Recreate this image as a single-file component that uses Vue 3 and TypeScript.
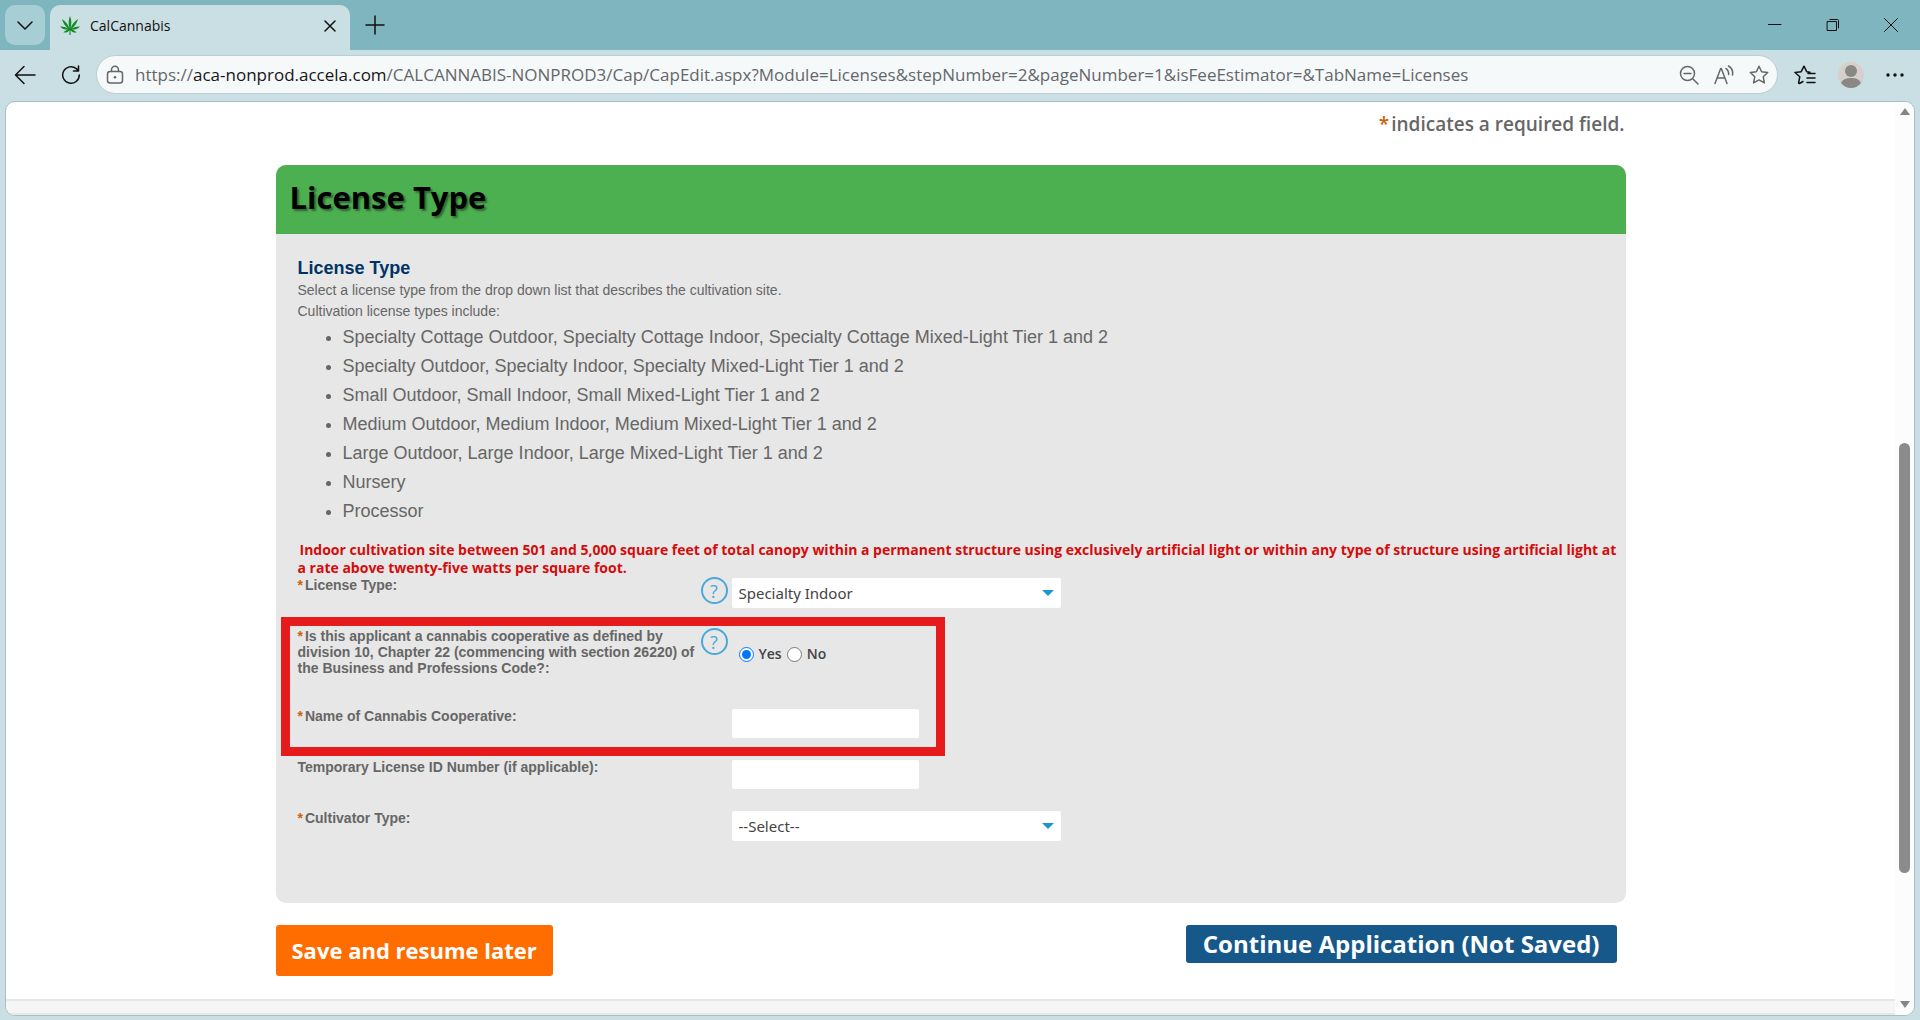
<script setup lang="ts">
import { ref } from 'vue'

const address = {
  scheme: 'https://',
  host: 'aca-nonprod.accela.com',
  path: '/CALCANNABIS-NONPROD3/Cap/CapEdit.aspx?Module=Licenses&stepNumber=2&pageNumber=1&isFeeEstimator=&TabName=Licenses',
}

const cultivationTypes: string[] = [
  'Specialty Cottage Outdoor, Specialty Cottage Indoor, Specialty Cottage Mixed-Light Tier 1 and 2',
  'Specialty Outdoor, Specialty Indoor, Specialty Mixed-Light Tier 1 and 2',
  'Small Outdoor, Small Indoor, Small Mixed-Light Tier 1 and 2',
  'Medium Outdoor, Medium Indoor, Medium Mixed-Light Tier 1 and 2',
  'Large Outdoor, Large Indoor, Large Mixed-Light Tier 1 and 2',
  'Nursery',
  'Processor',
]

const licenseType = ref('Specialty Indoor')
const isCooperative = ref('yes')
const cooperativeName = ref('')
const temporaryId = ref('')
const cultivatorType = ref('')
</script>

<template>
  <div class="browser">
    <header class="tab-strip">
      <button class="tab-menu" type="button" aria-label="Tab actions">
        <svg width="18" height="18" viewBox="0 0 18 18"><path d="M2 6l7 7 7-7" /></svg>
      </button>
      <div class="tab">
        <svg class="leaf" width="20" height="20" viewBox="0 0 20 20">
          <path d="M10 0C8.300 4 8.300 8 9.500 12 7.800 8.200 5 5 2 3c.9 4 3.300 7.200 6.600 9.700C6 11.200 3 10.400 0 10.500c2 2.300 4.800 3.400 8.300 3.300-2 .3-3.800 1.200-4.900 2.600 2.300.6 4.400-.1 6.100-1.800L9.400 19h1.200l-.1-4.400c1.700 1.700 3.800 2.400 6.100 1.800-1.100-1.400-2.900-2.300-4.900-2.600 3.500.1 6.300-1 8.300-3.300-3-.1-6 .7-8.600 2.200C14.700 10.200 17.100 7 18 3c-3 2-5.800 5.200-7.500 9C11.700 8 11.700 4 10 0z" />
        </svg>
        <span class="tab-title">CalCannabis</span>
        <button class="tab-close" type="button" aria-label="Close tab">
          <svg width="12" height="12" viewBox="0 0 12 12"><path d="M1 1l10 10M11 1L1 11" /></svg>
        </button>
      </div>
      <button class="new-tab" type="button" aria-label="New tab">
        <svg width="20" height="20" viewBox="0 0 20 20"><path d="M10 1v18M1 10h18" /></svg>
      </button>
      <div class="window-controls">
        <button type="button" aria-label="Minimize">
          <svg width="14" height="14" viewBox="0 0 14 14"><path class="thin" d="M0 6.500h13" /></svg>
        </button>
        <button type="button" aria-label="Restore">
          <svg width="14" height="14" viewBox="0 0 14 14"><path class="thin" d="M1.500 3.500h9v9h-9zM4 1.500h7.500q1 0 1 1V10" /></svg>
        </button>
        <button type="button" aria-label="Close window">
          <svg width="14" height="14" viewBox="0 0 14 14"><path class="thin" d="M.5.500l13 13M13.500.500l-13 13" /></svg>
        </button>
      </div>
    </header>

    <nav class="toolbar">
      <button type="button" aria-label="Back">
        <svg width="22" height="20" viewBox="0 0 22 20"><path d="M10 1.500L1.500 10l8.500 8.500M1.500 10H21" /></svg>
      </button>
      <button type="button" aria-label="Refresh">
        <svg width="20" height="20" viewBox="0 0 20 20"><path d="M18.300 10a8.300 8.300 0 1 1-3-6.400l2 2M17.500 1v5h-5" /></svg>
      </button>
      <div class="address-bar">
        <svg class="lock" width="18" height="20" viewBox="0 0 18 20">
          <rect x="1.500" y="6.500" width="15" height="11.500" rx="2.500" /><path d="M5.500 6.500V4.700a3.500 3.500 0 0 1 7 0v1.800" /><circle class="dot" cx="9" cy="12.300" r="1.300" />
        </svg>
        <span class="url">{{ address.scheme }}<b>{{ address.host }}</b>{{ address.path }}</span>
        <div class="address-actions">
          <button type="button" aria-label="Zoom out">
            <svg width="20" height="20" viewBox="0 0 20 20"><circle cx="8.500" cy="8.500" r="7" /><path d="M13.700 13.700l5.300 5.300M5 8.500h7" /></svg>
          </button>
          <button type="button" aria-label="Read aloud">
            <svg width="20" height="20" viewBox="0 0 20 20"><path d="M1 18.500L6.700 3.500h.6l5.700 15M3.200 13h7.600M12 3.500q3 2 2.600 6M14.500 1q5 3 4 9" /></svg>
          </button>
          <button type="button" aria-label="Add to favorites">
            <svg width="20" height="20" viewBox="0 0 20 20"><path d="M10 1.200l2.600 5.600 6.100.7-4.500 4.200 1.200 6.200-5.400-3-5.400 3 1.200-6.200L1.300 7.500l6.100-.7z" /></svg>
          </button>
        </div>
      </div>
      <div class="browser-actions">
        <button type="button" aria-label="Favorites">
          <svg width="22" height="20" viewBox="0 0 22 20"><path d="M9 16.500L5.500 18.500l-.9-.5 1.200-6.300L1 7.500l6.200-.8L10 1.200l2.700 5.500 3.300.5M14 8.500h7M13 13h8M13 17.500h8" /></svg>
        </button>
        <button type="button" aria-label="Profile">
          <svg class="avatar" width="26" height="28" viewBox="0 0 26 28"><circle cx="13" cy="14" r="13" fill="#d5d0cc" /><circle cx="13" cy="10" r="6" fill="#8b8785" /><path d="M3 22q2-5 10-5t10 5q-4 5-10 5T3 22z" fill="#8b8785" /></svg>
        </button>
        <button type="button" aria-label="Settings and more">
          <svg class="dots" width="18" height="6" viewBox="0 0 18 6"><circle cx="2" cy="3" r="1.700" /><circle cx="9" cy="3" r="1.700" /><circle cx="16" cy="3" r="1.700" /></svg>
        </button>
      </div>
    </nav>

    <div class="viewport">
      <div class="page">
        <main class="content">
          <p class="required-note"><span class="star">*</span>indicates a required field.</p>

          <form class="card" @submit.prevent>
            <h1>License Type</h1>
            <div class="card-body">
              <h2>License Type</h2>
              <p class="intro">Select a license type from the drop down list that describes the cultivation site.</p>
              <p class="intro">Cultivation license types include:</p>
              <ul>
                <li v-for="item in cultivationTypes" :key="item">{{ item }}</li>
              </ul>
              <p class="warning">
                Indoor cultivation site between 501 and 5,000 square feet of total canopy within a permanent structure using exclusively artificial light or within any type of structure using artificial light at a rate above twenty-five watts per square foot.
              </p>

              <div class="row">
                <label for="license-type"><span class="star">*</span>License Type:</label>
                <button class="help" type="button" aria-label="Help: license type">?</button>
                <div class="select">
                  <select id="license-type" v-model="licenseType"><option>Specialty Indoor</option></select>
                </div>
              </div>

              <div class="highlight">
                <div class="row tall" role="radiogroup" aria-labelledby="coop-question">
                  <span id="coop-question"><span class="star">*</span>Is this applicant a cannabis cooperative as defined by division 10, Chapter 22 (commencing with section 26220) of the Business and Professions Code?:</span>
                  <button class="help" type="button" aria-label="Help: cannabis cooperative">?</button>
                  <div class="radios">
                    <input id="coop-yes" v-model="isCooperative" type="radio" name="coop" value="yes"><label for="coop-yes">Yes</label>
                    <input id="coop-no" v-model="isCooperative" type="radio" name="coop" value="no"><label for="coop-no">No</label>
                  </div>
                </div>
                <div class="row">
                  <label for="coop-name"><span class="star">*</span>Name of Cannabis Cooperative:</label>
                  <input id="coop-name" v-model="cooperativeName" class="text" type="text">
                </div>
              </div>

              <div class="row">
                <label for="temp-id">Temporary License ID Number (if applicable):</label>
                <input id="temp-id" v-model="temporaryId" class="text" type="text">
              </div>
              <div class="row">
                <label for="cultivator-type"><span class="star">*</span>Cultivator Type:</label>
                <div class="select">
                  <select id="cultivator-type" v-model="cultivatorType"><option value="">--Select--</option></select>
                </div>
              </div>
            </div>
          </form>

          <div class="actions">
            <button class="save" type="button">Save and resume later</button>
            <button class="continue" type="button">Continue Application (Not Saved)</button>
          </div>
        </main>
        <div class="page-footer"></div>
      </div>
      <div class="scrollbar" aria-hidden="true">
        <i class="arrow-up"></i>
        <div class="track"><i class="thumb"></i></div>
        <i class="arrow-down"></i>
      </div>
    </div>
  </div>
</template>

<style>
body {
  margin: 0;
}
</style>

<style scoped>
*,
*::before,
*::after {
  box-sizing: border-box;
}

.browser {
  display: flex;
  flex-direction: column;
  min-height: 100vh;
  background: #c9dfe3;
  font-family: "Open Sans", "Noto Sans", sans-serif;
}

button {
  margin: 0;
  padding: 0;
  border: 0;
  background: none;
  color: inherit;
  font-family: inherit;
}

svg {
  display: block;
  fill: none;
  stroke: #111;
  stroke-width: 1.5;
  stroke-linecap: round;
  stroke-linejoin: round;
}

.thin {
  stroke-width: 1;
}

h1,
h2,
p,
ul {
  margin: 0;
}

/* Tab strip */
.tab-strip {
  display: flex;
  align-items: flex-end;
  height: 50px;
  padding-left: 5px;
  background: #7eb5be;
}

.tab-menu {
  display: grid;
  place-items: center;
  width: 40px;
  height: 40px;
  margin: 0 5px 5px 0;
  border-radius: 10px;
  background: #a8ced5;
}

.tab {
  display: flex;
  align-items: center;
  gap: 10px;
  width: 300px;
  height: 45px;
  padding: 0 14px 4px 10px;
  border-radius: 10px 10px 0 0;
  background: #c9dfe3;
}

.leaf {
  fill: #148a24;
  stroke: none;
}

.tab-title {
  flex: 1;
  color: #111;
  font-size: 14px;
}

.new-tab {
  margin: 0 0 15px 15px;
}

.window-controls {
  display: flex;
  align-self: center;
  gap: 44px;
  margin: 0 22px 0 auto;
}

/* Address row */
.toolbar {
  display: flex;
  align-items: center;
  height: 51px;
  padding: 0 16px 2px 14px;
  gap: 25px;
}

.address-bar {
  display: flex;
  flex: 1;
  align-items: center;
  height: 39px;
  margin: 0 -9px 0 -10px;
  padding: 0 8px 0 9px;
  border: 1px solid #bccdd0;
  border-radius: 20px;
  background: #f6f9fa;
}

.lock,
.address-actions svg {
  stroke: #666;
}

.lock .dot {
  fill: #666;
  stroke: none;
}

.url {
  flex: 1;
  padding-left: 11px;
  color: #646769;
  font-size: 17px;
  white-space: nowrap;
}

.url b {
  color: #161616;
  font-weight: 400;
}

.address-actions {
  display: flex;
  gap: 15px;
}

.browser-actions {
  display: flex;
  align-items: center;
  gap: 22px;
}

.avatar {
  stroke: none;
}

.dots {
  fill: #111;
  stroke: none;
}

/* Web page */
.viewport {
  display: flex;
  flex: 1;
  margin: 0 5px 4px;
  border: 1px solid #a9bfc3;
  border-radius: 10px;
  background: #fff;
  overflow: hidden;
}

.page {
  display: flex;
  flex: 1;
  flex-direction: column;
}

.content {
  width: 100%;
  max-width: 1350px;
  margin: 0 auto;
  color: #666;
}

.required-note {
  padding: 9px 1px 27px 0;
  font-size: 19px;
  font-weight: 600;
  line-height: 27px;
  text-align: right;
}

.star {
  margin-right: 2px;
  color: #c8640a;
}

.card {
  border-radius: 10px;
  background: #e7e7e7;
  overflow: hidden;
}

h1 {
  padding: 10px 14px 15px;
  background: #4caf50;
  color: #000;
  font-size: 31px;
  font-weight: 700;
  line-height: 44px;
  text-shadow: 2px 2px 2px rgba(0, 0, 0, 0.4);
}

.card-body {
  padding: 22px 0 42px 22px;
  font-family: "Liberation Sans", Arial, sans-serif;
}

h2 {
  color: #003366;
  font-size: 18px;
  line-height: 24px;
}

.intro {
  font-size: 14px;
  line-height: 21px;
}

ul {
  padding: 1px 0 0 45px;
  font-size: 18px;
  line-height: 29px;
}

.warning {
  padding: 15px 8px 0 0;
  color: #d60b0b;
  font-family: "Open Sans", "Noto Sans", sans-serif;
  font-size: 14px;
  font-weight: 700;
  line-height: 18px;
  text-indent: 2px;
}

.row {
  display: grid;
  grid-template-columns: 404px 30px 1fr;
  align-items: start;
  min-height: 51px;
  font-size: 14px;
  font-weight: 700;
  line-height: 16px;
}

.row.tall {
  min-height: 80px;
}

.highlight {
  position: relative;
}

/* Red frame drawn round the two cooperative questions */
.highlight::after {
  content: "";
  position: absolute;
  top: -11px;
  left: -17px;
  width: 664px;
  height: 139px;
  border: 9px solid #e61c1c;
  pointer-events: none;
}

.help {
  width: 27px;
  height: 27px;
  margin-left: -1px;
  border: 2px solid #4aa9d8;
  border-radius: 50%;
  color: #4aa9d8;
  font-family: "Open Sans", sans-serif;
  font-size: 18px;
  line-height: 22px;
}

.select,
.text,
.radios {
  grid-column: 3;
}

.select {
  position: relative;
  width: 329px;
  margin-top: 1px;
}

.select::after {
  content: "";
  position: absolute;
  top: 12px;
  right: 7px;
  border: 6px solid transparent;
  border-top-color: #1b96d5;
  border-bottom: 0;
  pointer-events: none;
}

select {
  display: block;
  width: 100%;
  height: 30px;
  padding: 0 24px 0 7px;
  border: 0;
  border-radius: 2px;
  appearance: none;
  background: #fff;
  color: #444;
  font: 15px "Noto Sans", sans-serif;
}

.text {
  width: 187px;
  height: 29px;
  margin-top: 1px;
  padding: 0 7px;
  border: 0;
  border-radius: 2px;
  background: #fff;
  font: 15px "Noto Sans", sans-serif;
}

.radios {
  display: flex;
  align-items: center;
  gap: 5px;
  padding: 18px 0 0 7px;
  color: #444;
  font-family: "Open Sans", "Noto Sans", sans-serif;
  font-weight: 600;
}

.radios input {
  width: 15px;
  height: 15px;
  margin: 0;
  accent-color: #0075ff;
}

.actions {
  display: flex;
  align-items: flex-start;
  justify-content: space-between;
  padding: 22px 9px 22px 0;
}

.actions button {
  border-radius: 3px;
  color: #fff;
  font-weight: 700;
}

.save {
  padding: 0 16px;
  background: #ff6c00;
  font-size: 22px;
  line-height: 51px;
}

.continue {
  padding: 0 17px;
  background: #17588b;
  font-size: 24px;
  line-height: 38px;
}

.page-footer {
  height: 16px;
  margin-top: auto;
  border-top: 2px solid #e6e8e8;
  border-bottom: 2px solid #e6e8e8;
  background: #f5f5f5;
}

.scrollbar {
  display: flex;
  flex-direction: column;
  align-items: center;
  width: 19px;
  padding: 6px 0 7px;
  background: #fcfcfc;
}

.track {
  display: flex;
  flex: 1;
  flex-direction: column;
  align-items: center;
  padding: 2px 0;
}

.track::before {
  content: "";
  flex: 326;
}

.track::after {
  content: "";
  flex: 126;
}

.thumb {
  flex: 430;
  width: 11px;
  border-radius: 6px;
  background: #8b8b8b;
}

.arrow-up,
.arrow-down {
  border: 5px solid transparent;
}

.arrow-up {
  border-top: 0;
  border-bottom: 7px solid #858585;
}

.arrow-down {
  border-bottom: 0;
  border-top: 7px solid #858585;
}
</style>
